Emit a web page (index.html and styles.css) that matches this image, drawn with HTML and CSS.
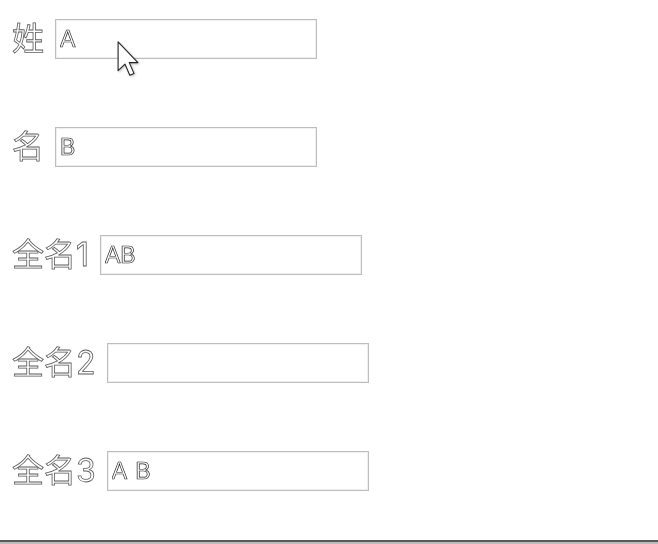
FILE: index.html
```html
<!DOCTYPE html>
<html lang="zh">
<head>
<meta charset="utf-8">
<title>姓名</title>
<link rel="stylesheet" href="styles.css">
</head>
<body>
<div class="page">
  <form class="form">
    <div class="row"><label class="label">姓</label><input class="field" type="text" value="A"></div>
    <div class="row"><label class="label">名</label><input class="field" type="text" value="B"></div>
    <div class="row"><label class="label">全名1</label><input class="field" type="text" value="AB"></div>
    <div class="row"><label class="label">全名2</label><input class="field" type="text" value=""></div>
    <div class="row"><label class="label">全名3</label><input class="field" type="text" value="A B"></div>
  </form>
  <div class="bottom-edge"></div>
</div>
<svg class="pointer" width="22" height="36" viewBox="0 0 12 20">
  <path d="M0.5 0.5 L0.5 16.5 L4.3 12.8 L7 19 L9.3 18 L6.7 12 L11.5 12 Z" fill="#fff" stroke="#222" stroke-width="0.6" stroke-linejoin="round"/>
</svg>
</body>
</html>
```
FILE: styles.css
```css
html, body {
  margin: 0;
  height: 100%;
  background: #fff;
}
.page {
  height: 100%;
  display: flex;
  flex-direction: column;
  box-sizing: border-box;
}
.form {
  flex: 1;
  display: flex;
  flex-direction: column;
  gap: 68px;
  padding: 19px 0 0 12px;
  opacity: 0.999;
}
.row {
  display: flex;
  align-items: center;
  gap: 11px;
  height: 40px;
}
.label {
  font-family: Inter, "Noto Sans CJK SC", sans-serif;
  font-size: 32px;
  line-height: 40px;
  color: #fff;
  -webkit-text-stroke: 0.8px #5a5a5a;
  -webkit-font-smoothing: antialiased;
}
.field {
  box-sizing: border-box;
  width: 262px;
  height: 40px;
  margin: 0;
  padding: 0 4px;
  border: 1px solid #bdbdbd;
  box-shadow: inset 0 0 0 1px #efefef;
  font-family: "Liberation Sans", Arial, sans-serif;
  font-size: 23px;
  word-spacing: 3px;
  color: #fff;
  -webkit-text-stroke: 0.7px #222;
  -webkit-font-smoothing: antialiased;
  background: #fff;
  outline: none;
}
.bottom-edge {
  height: 4px;
  border-top: 2px solid #5a5a5a;
  background: #bdbdbd;
  box-sizing: border-box;
}
.pointer {
  position: absolute;
  left: 117px;
  top: 41px;
  filter: drop-shadow(1px 1px 1px rgba(0,0,0,0.25));
}
```
